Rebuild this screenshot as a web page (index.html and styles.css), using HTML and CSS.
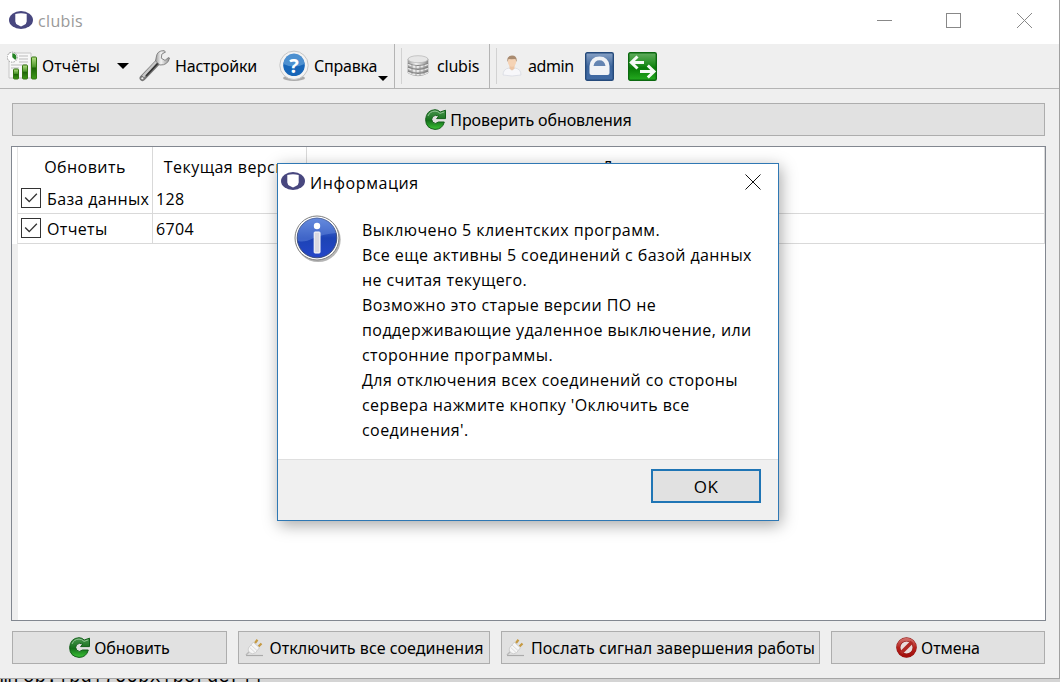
FILE: index.html
```html
<!DOCTYPE html>
<html lang="ru">
<head>
<meta charset="UTF-8">
<meta name="viewport" content="width=device-width, initial-scale=1.0">
<title>clubis</title>
<link rel="stylesheet" href="styles.css">
</head>
<body>
    <!-- shared icons -->
    <svg class="defs" width="0" height="0">
        <defs>
            <linearGradient id="green" x1="0" y1="0" x2="0" y2="1">
                <stop offset="0" stop-color="#4a9650"/>
                <stop offset="0.55" stop-color="#14701a"/>
                <stop offset="1" stop-color="#3cc437"/>
            </linearGradient>
            <linearGradient id="bar" x1="0" y1="0" x2="0" y2="1">
                <stop offset="0" stop-color="#b9e08a"/>
                <stop offset="0.45" stop-color="#4c962a"/>
                <stop offset="0.5" stop-color="#1d6208"/>
                <stop offset="1" stop-color="#3f9b18"/>
            </linearGradient>
            <linearGradient id="steel" x1="0" y1="0" x2="1" y2="0">
                <stop offset="0" stop-color="#9b9b9b"/>
                <stop offset="0.4" stop-color="#f4f4f4"/>
                <stop offset="1" stop-color="#8a8a8a"/>
            </linearGradient>
            <linearGradient id="red" x1="0" y1="0" x2="0" y2="1">
                <stop offset="0" stop-color="#cf6a66"/>
                <stop offset="0.5" stop-color="#b5211c"/>
                <stop offset="1" stop-color="#a30f0c"/>
            </linearGradient>
            <linearGradient id="info" x1="0" y1="0" x2="0" y2="1">
                <stop offset="0" stop-color="#5f86dc"/>
                <stop offset="0.5" stop-color="#1c43b5"/>
                <stop offset="1" stop-color="#2546c8"/>
            </linearGradient>
            <linearGradient id="lock" x1="0" y1="0" x2="0" y2="1">
                <stop offset="0" stop-color="#8aa3c6"/>
                <stop offset="0.5" stop-color="#3c659c"/>
                <stop offset="1" stop-color="#426ba5"/>
            </linearGradient>
            <linearGradient id="swap" x1="0" y1="0" x2="0" y2="1">
                <stop offset="0" stop-color="#63ad60"/>
                <stop offset="0.45" stop-color="#1c8c1a"/>
                <stop offset="0.55" stop-color="#087a07"/>
                <stop offset="1" stop-color="#25ac20"/>
            </linearGradient>
        </defs>
        <symbol id="logo" viewBox="0 0 24 18">
            <ellipse cx="12" cy="9" rx="12" ry="9" fill="#48477f"/>
            <path d="M6.3 3 Q12 1.6 17.7 3 V10.5 Q17.5 13 15 14 L12 15.4 L9 14 Q6.5 13 6.3 10.5Z" fill="#fff"/>
        </symbol>
        <symbol id="refresh" viewBox="0 0 21 21">
            <path d="M15.2 3 L20.5 1.2 V9.6 H11.6 L13.8 7.2 Q10.5 5.2 7.6 7.6 Q5.8 10.4 7.6 13.2 Q10.5 15.8 13.4 13 H19.3 Q17.5 20.3 10 20.4 Q.7 19.6 .6 10.4 Q1.4 1.2 10 .7 Q13 .8 15.2 3Z" fill="url(#green)" stroke="#135f1a"/>
            <path d="M3 7 Q5 2.2 10 2.1 Q13 2.2 15 4.4 L19.2 3" fill="none" stroke="#8fc492"/>
        </symbol>
        <symbol id="plug" viewBox="0 0 20 18">
            <path d="M1 16.5 H18" stroke="#aaa" stroke-width="1.2"/>
            <path d="M1 16 L5 12" stroke="#b9b9b9" stroke-width="1.5"/>
            <path d="M10 4 L12.5 .8 M13.5 7.6 L16.5 4.5" stroke="#c69a43" stroke-width="2.2"/>
            <path d="M8.3 3.2 L14.4 8.8 L10.5 13.8 Q7.5 15.8 4.5 13.6 Q2.4 11 3.5 8.8Z" fill="#f6f6f6" stroke="#c7c7c7" stroke-width=".8"/>
            <path d="M6 6 L12 11.5 M4.6 8.3 L10 13.5" stroke="#cfcfcf" stroke-width=".8"/>
        </symbol>
    </svg>

    <div class="window">
        <div class="titlebar">
            <svg class="logo"><use href="#logo"/></svg>
            <span class="title">clubis</span>
            <svg class="controls" width="160" height="20" fill="none" stroke="#888" shape-rendering="crispEdges">
                <path d="M1 9.5 H16"/>
                <rect x="70.5" y="2.5" width="14" height="14"/>
                <path d="M141 2 L156 17 M156 2 L141 17" shape-rendering="auto"/>
            </svg>
        </div>

        <div class="toolbar">
            <div class="group main-tools">
                <div class="tool reports">
                    <svg width="30" height="30" viewBox="0 0 30 30">
                        <path d="M2 2 H24 V27 H2Z" fill="#f8f8f8" stroke="#c6c6c6"/>
                        <path d="M12 5 H21 M12 8 H21 M12 11 H21 M4 14 H20 M4 17 H12" stroke="#bbb"/>
                        <circle cx="5.3" cy="6.2" r="5" fill="#fff" stroke="#999" stroke-dasharray="1.5 1"/>
                        <path d="M5.3 6.2 V2.2 A4 4 0 0 1 8.3 9Z" fill="#258425"/>
                        <rect x="6.5" y="18" width="5" height="10" rx="1" fill="url(#bar)" stroke="#32750f"/>
                        <rect x="15.5" y="14" width="5" height="14" rx="1" fill="url(#bar)" stroke="#32750f"/>
                        <rect x="24.5" y="6" width="5" height="22" rx="1" fill="url(#bar)" stroke="#32750f"/>
                    </svg>
                    <span>Отчёты</span>
                    <i class="arrow"></i>
                </div>
                <div class="tool settings">
                    <svg width="34" height="34" viewBox="0 0 34 34">
                        <path d="M4.6 29 L20 13" stroke="#777" stroke-width="6" stroke-linecap="round"/>
                        <path d="M5 27.5 L19 12.5" stroke="#c8c8c8" stroke-width="2.6"/>
                        <path d="M8 27 L20 14" stroke="#333" stroke-width="1.8"/>
                        <path d="M26 1.6 Q19 1.6 18.3 8 L17.5 12 L21.8 16 Q30 16.4 31.5 9 L30.5 8.5 L27 11.4 L23.3 9.2 L23.8 5.2 L27.5 3Z" fill="url(#steel)" stroke="#7c7c7c" stroke-width=".9"/>
                        <circle cx="4.3" cy="29.3" r="1.4" fill="#eee" stroke="#666" stroke-width=".6"/>
                    </svg>
                    <span>Настройки</span>
                </div>
                <div class="tool help">
                    <svg width="32" height="32" viewBox="0 0 32 32">
                        <ellipse cx="16" cy="28" rx="11" ry="3" fill="#aaa"/>
                        <circle cx="16" cy="15.3" r="14.2" fill="#f3f3f3" stroke="#c6c6c6"/>
                        <circle cx="16" cy="15.3" r="10.8" fill="#1866b8"/>
                        <path d="M5.5 14 A10.5 10.5 0 0 1 26.5 14 Q16 19 5.5 14Z" fill="#4d90d0"/>
                        <text class="question" x="16" y="22.5" text-anchor="middle">?</text>
                    </svg>
                    <span>Справка</span>
                    <i class="arrow corner"></i>
                </div>
            </div>
            <div class="group server">
                <div class="tool">
                    <svg width="22" height="22" viewBox="0 0 22 22">
                        <path d="M1 4 V18 Q11 23.5 21 18 V4Z" fill="url(#steel)" stroke="#999" stroke-width=".7"/>
                        <path d="M1 8 Q11 12.5 21 8 M1 12 Q11 16.5 21 12 M1 16 Q11 20.5 21 16" fill="none" stroke="#808080" stroke-width="1.3"/>
                        <path d="M1 9.5 Q11 14 21 9.5 M1 13.5 Q11 18 21 13.5 M1 17.5 Q11 22 21 17.5" fill="none" stroke="#ececec" stroke-width="1.2"/>
                        <path d="M5 9 V19 M9 10 V20.5 M13 10 V20.5 M17 9 V19" stroke="#909090" stroke-width=".8"/>
                        <path d="M1 4 V8 Q11 12 21 8 V4Z" fill="url(#steel)"/>
                        <ellipse cx="11" cy="4.2" rx="10" ry="3.5" fill="#e6e6e6" stroke="#b4b4b4" stroke-width=".7"/>
                    </svg>
                    <span>clubis</span>
                </div>
            </div>
            <div class="group user">
                <div class="tool">
                    <svg width="20" height="22" viewBox="0 0 20 22">
                        <path d="M1 20 Q1 14 7 13 L10 15 L13 13 Q19 14 19 20 Q10 22 1 20Z" fill="#f7f7fa" stroke="#d4d7e0" stroke-width=".7"/>
                        <path d="M7.5 10 H12.5 V13.5 L10 15.5 L7.5 13.5Z" fill="#edc5a4"/>
                        <ellipse cx="10" cy="6.5" rx="4.2" ry="5.2" fill="#f5d3b5"/>
                        <path d="M5.4 7 Q4.5 .8 10 .6 Q15.5 .8 14.6 7 L13.4 4 Q9 4.3 6.6 4Z" fill="#a98b70"/>
                    </svg>
                    <span>admin</span>
                </div>
                <svg class="lock" width="29" height="29" viewBox="0 0 29 29">
                    <rect x=".7" y=".7" width="27.6" height="27.6" rx="1.5" fill="url(#lock)" stroke="#254a7b" stroke-width="1.4"/>
                    <path d="M4.5 21 V14 Q5.5 4.5 14.5 4.5 Q23.5 4.5 24.5 14 V21 Q24.5 23 22.5 23 H6.5 Q4.5 23 4.5 21Z" fill="#f1f3f6"/>
                    <path d="M8.5 14 Q9.5 8.2 14.5 8.2 Q19.5 8.2 20.5 14Z" fill="#6485b2"/>
                </svg>
                <svg class="swap" width="29" height="29" viewBox="0 0 29 29">
                    <rect x=".7" y=".7" width="27.6" height="27.6" rx="1.5" fill="url(#swap)" stroke="#0c6910" stroke-width="1.4"/>
                    <path d="M3 10.5 H16 M9.5 4.5 L3.3 10.5 L9.5 16.5 M12 19.5 H26 M19.8 13.5 L26 19.5 L19.8 25.5" fill="none" stroke="#f5faf5" stroke-width="3"/>
                </svg>
            </div>
        </div>

        <div class="content">
            <button class="btn check"><svg class="icon"><use href="#refresh"/></svg>Проверить обновления</button>

            <div class="table">
                <div class="row head">
                    <div class="cell">Обновить</div>
                    <div class="cell">Текущая версия</div>
                    <div class="cell">Доступная версия</div>
                </div>
                <div class="row">
                    <div class="cell"><svg class="box" viewBox="0 0 20 20"><path d="M3.5 9.5 L8 14 L16.5 5.2"/></svg><span class="name">База данных</span></div>
                    <div class="cell">128</div>
                    <div class="cell"></div>
                </div>
                <div class="row">
                    <div class="cell"><svg class="box" viewBox="0 0 20 20"><path d="M3.5 9.5 L8 14 L16.5 5.2"/></svg><span>Отчеты</span></div>
                    <div class="cell">6704</div>
                    <div class="cell"></div>
                </div>
                <div class="rest"></div>
            </div>

            <div class="actions">
                <button class="btn"><svg class="icon"><use href="#refresh"/></svg>Обновить</button>
                <button class="btn wide"><svg class="plug"><use href="#plug"/></svg>Отключить все соединения</button>
                <button class="btn wide"><svg class="plug"><use href="#plug"/></svg>Послать сигнал завершения работы</button>
                <button class="btn">
                    <svg class="icon" viewBox="0 0 21 21">
                        <circle cx="10.5" cy="10.5" r="8.2" fill="#e9dcdc" stroke="#8f1512" stroke-width="4.2"/>
                        <circle cx="10.5" cy="10.5" r="8.2" fill="none" stroke="url(#red)" stroke-width="3.2"/>
                        <path d="M5 16 L16 5" stroke="#b02824" stroke-width="3.8"/>
                    </svg>Отмена</button>
            </div>
        </div>
    </div>

    <div class="behind"><span>mfob.|bd|700bx|border||</span></div>

    <div class="dialog">
        <div class="dialog-title">
            <svg class="logo"><use href="#logo"/></svg>
            <span>Информация</span>
            <svg class="close" width="16" height="16"><path d="M.5 .5 L15.5 15.5 M15.5 .5 L.5 15.5" stroke="#111"/></svg>
        </div>
        <div class="dialog-body">
            <svg class="info" width="48" height="50" viewBox="0 0 48 50">
                <circle cx="24.2" cy="24.6" r="22.5" fill="#b5b5b5"/>
                <circle cx="23" cy="23" r="22" fill="#fff" stroke="#808080"/>
                <circle cx="23" cy="23" r="19.8" fill="url(#info)" stroke="#3c4d7c"/>
                <path d="M4 26 A19.3 19.3 0 0 1 42 18 Q30 19 20 23 Q10 28 4 26Z" fill="#6d90e0" opacity=".45"/>
                <circle cx="23" cy="11" r="3.2" fill="#fff"/>
                <rect x="20.2" y="17" width="5.8" height="21" rx=".8" fill="#d9d9e0" stroke="#fff"/>
            </svg>
            <p>Выключено 5 клиентских программ.<br>
            Все еще активны 5 соединений с базой данных<br>
            не считая текущего.<br>
            Возможно это старые версии ПО не<br>
            поддерживающие удаленное выключение, или<br>
            сторонние программы.<br>
            Для отключения всех соединений со стороны<br>
            сервера нажмите кнопку 'Оключить все<br>
            соединения'.</p>
        </div>
        <div class="dialog-footer">
            <button class="ok">OK</button>
        </div>
    </div>
</body>
</html>
```
FILE: styles.css
```css
* {
    box-sizing: border-box;
}
body {
    margin: 0;
    width: 1060px;
    height: 682px;
    overflow: hidden;
    position: relative;
    background-color: #d4d4d4;
    font-family: "Open Sans", "Noto Sans", sans-serif;
    font-size: 16px;
    color: #000;
}
svg {
    display: block;
    flex: none;
}
.defs {
    position: absolute;
}
span {
    white-space: nowrap;
}
.window {
    display: flex;
    flex-direction: column;
    height: 679px;
    background-color: #efefef;
    border-right: 1px solid #a0a0a0;
    border-bottom: 1px solid #a5a5a5;
}
.titlebar {
    display: flex;
    height: 44px;
    padding: 11px 23px 0 9px;
    background-color: #fff;
}
.logo {
    width: 24px;
    height: 18px;
}
.title {
    margin-left: 5px;
    line-height: 21px;
    letter-spacing: 0.35px;
    color: #999;
}
.controls {
    margin-left: auto;
}

/* toolbar */
.toolbar {
    display: flex;
    height: 45px;
    border-bottom: 1px solid #b4b4b4;
    font-family: "Noto Sans", sans-serif;
    letter-spacing: -0.2px;
}
.group {
    display: flex;
    align-items: center;
}
.tool {
    display: flex;
    align-items: center;
}
.main-tools {
    width: 395px;
    border-right: 1px solid #b4b4b4;
}
.reports {
    width: 138px;
    padding-left: 7px;
}
.reports span {
    width: 75px;
    margin-left: 5px;
    letter-spacing: 0.1px;
}
.settings {
    width: 140px;
}
.settings span {
    margin-left: 3px;
}
.help {
    position: relative;
    width: 116px;
}
.help span {
    margin-left: 4px;
}
.question {
    font: bold 20px "Open Sans", sans-serif;
    fill: #fff;
}
.arrow {
    border: 6px solid transparent;
    border-top-color: #000;
    border-bottom: 0;
}
.corner {
    position: absolute;
    right: 6px;
    bottom: 1px;
    border-width: 5px;
    border-bottom: 0;
}
.server::before,
.user::before {
    content: "";
    width: 1px;
    height: 36px;
    margin: 0 5px 0 6px;
    background-color: #d2d2d2;
}
.server {
    width: 95px;
    border-right: 1px solid #b4b4b4;
}
.server span {
    margin-left: 8px;
}
.user .tool {
    width: 83px;
}
.user span {
    margin-left: 6px;
    letter-spacing: -0.4px;
}
.swap {
    margin-left: 14px;
}

/* content */
.content {
    display: flex;
    flex-direction: column;
    flex: 1;
    padding: 14px 13px 14px 11px;
}
.btn {
    display: flex;
    align-items: center;
    justify-content: center;
    height: 33px;
    padding: 0;
    border: 1px solid #adadad;
    background-color: #e1e1e1;
    font-family: "Noto Sans", sans-serif;
    font-size: 16px;
    letter-spacing: -0.1px;
    color: #000;
    white-space: nowrap;
}
.wide {
    letter-spacing: 0.05px;
}
.check {
    margin: 0 1px 10px;
}
.icon {
    width: 21px;
    height: 21px;
    margin-right: 4px;
}
.plug {
    width: 20px;
    height: 18px;
    margin-right: 5px;
}
.table {
    display: flex;
    flex-direction: column;
    height: 475px;
    border: 1px solid #828790;
    background-color: #fff;
    letter-spacing: 0.35px;
}
.row {
    display: grid;
    grid-template-columns: 135px 154px 1fr;
    height: 30px;
    margin-left: 5px;
    border-left: 1px solid #e5e5e5;
    border-bottom: 1px solid #d9d9d9;
}
.cell {
    display: flex;
    align-items: center;
    padding: 1px 0 0 3px;
    border-right: 1px solid #d9d9d9;
    white-space: nowrap;
}
.cell span {
    margin-left: 6px;
}
.head {
    height: 37px;
    border-bottom: 0;
}
.head .cell {
    justify-content: center;
    padding: 3px 0 0;
    letter-spacing: 0.45px;
}
.box {
    width: 20px;
    height: 20px;
    margin-top: -3px;
    border: 1px solid #333;
    fill: none;
    stroke: #333;
    stroke-width: 1.5;
}
.rest {
    flex: 1;
    border-left: 6px solid #efefef;
}
.actions {
    display: grid;
    grid-template-columns: 215px 252px 319px 214px;
    gap: 11px;
    margin: 10px 1px 0;
}

/* text of the page that is under the window */
.behind {
    height: 3px;
    overflow: hidden;
    font-family: "Liberation Mono", monospace;
    font-size: 19px;
    letter-spacing: 0.1px;
}
.behind span {
    display: block;
    margin-top: -13px;
    line-height: 22px;
}

/* dialog */
.dialog {
    position: absolute;
    left: 277px;
    top: 163px;
    display: flex;
    flex-direction: column;
    width: 502px;
    height: 358px;
    border: 1px solid #2f78b4;
    background-color: #fff;
    box-shadow: 2px 4px 15px rgba(0, 0, 0, 0.35);
    letter-spacing: 0.42px;
}
.dialog-title {
    display: flex;
    height: 43px;
    padding: 8px 17px 0 3px;
}
.dialog-title span {
    margin-left: 5px;
    line-height: 22px;
    letter-spacing: 0.6px;
}
.close {
    margin: 2px 0 0 auto;
}
.dialog-body {
    display: flex;
    flex: 1;
    padding: 8px 0 0 16px;
}
.dialog-body p {
    margin: 3px 0 0 20px;
    line-height: 25px;
    white-space: nowrap;
}
.dialog-footer {
    display: flex;
    justify-content: flex-end;
    height: 61px;
    padding: 9px 17px 0 0;
    border-top: 1px solid #dfdfdf;
    background-color: #f0f0f0;
}
.ok {
    width: 110px;
    height: 34px;
    padding: 0;
    border: 2px solid #1f75b5;
    background-color: #e1e1e1;
    color: #000;
    font-family: "Open Sans", sans-serif;
    font-size: 17px;
    letter-spacing: 0.5px;
}
```
